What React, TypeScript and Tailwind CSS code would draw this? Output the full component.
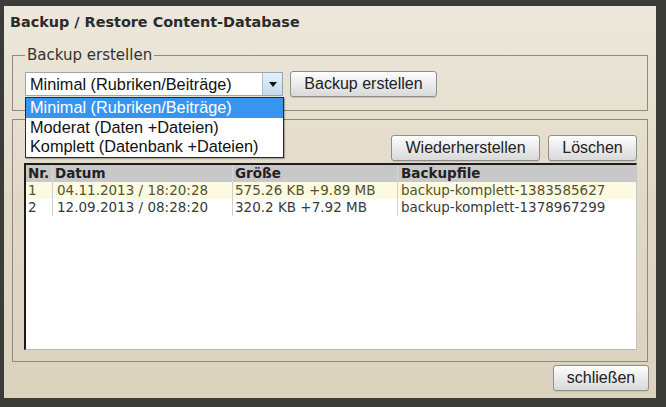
const rows = [
  { nr: "1", datum: "04.11.2013 / 18:20:28", groesse: "575.26 KB +9.89 MB", file: "backup-komplett-1383585627", active: true },
  { nr: "2", datum: "12.09.2013 / 08:28:20", groesse: "320.2 KB +7.92 MB", file: "backup-komplett-1378967299", active: false },
];

const options = ["Minimal (Rubriken/Beiträge)", "Moderat (Daten +Dateien)", "Komplett (Datenbank +Dateien)"];

function Btn({ label, className = "" }: { label: string; className?: string }) {
  return (
    <button
      className={`h-[26px] rounded-[3px] border border-[#8e8e8e] bg-linear-to-b from-[#fdfdfd] to-[#d9d9d9] text-[16px] leading-none text-[#222] font-['Liberation_Sans',Arial,sans-serif] shadow-[0_1px_0_#c9c2b2] ${className}`}
    >
      {label}
    </button>
  );
}

export default function App() {
  return (
    <div className="w-[666px] h-[407px] bg-[#3b3b39] pl-[4px] pt-[6px] pr-[10px] pb-[9px]">
      <div className="relative flex h-full flex-col bg-linear-to-b from-[#ede8dc] via-[#e1d9c7] to-[#dbd2be]">
        {/* Title */}
        <div className="h-[40px] pl-[6px] pt-[6px] text-[14.4px] leading-[20px] font-bold text-[#2b2b2b] font-['DejaVu_Sans',Verdana,sans-serif]">
          Backup / Restore Content-Database
        </div>

        {/* Backup erstellen */}
        <fieldset className="mx-[8px] border border-[#8f8a7e] pl-[12px] pt-[7px] pb-[13px]">
          <legend className="px-[2px] text-[15px] leading-[18px] text-[#333] font-['DejaVu_Sans',Verdana,sans-serif]">
            Backup erstellen
          </legend>
          <div className="flex items-center gap-[7px]">
            <div className="flex h-[24px] w-[258px] border border-[#9aa6b1] bg-white">
              <div className="flex-1 pl-[4px] text-[16.3px] leading-[22px] text-[#111] font-['Liberation_Sans',Arial,sans-serif]">
                Minimal (Rubriken/Beiträge)
              </div>
              <div className="flex w-[20px] items-center justify-center border-l border-[#a9bdd0] bg-linear-to-b from-[#e3f0fb] to-[#c4dbef]">
                <svg width="8" height="5" viewBox="0 0 8 5">
                  <path d="M0 0h8L4 5z" fill="#111" />
                </svg>
              </div>
            </div>
            <Btn label="Backup erstellen" className="w-[147px]" />
          </div>
        </fieldset>

        {/* Backup wiederherstellen */}
        <fieldset className="mx-[8px] mt-[8px] border border-[#8f8a7e] pl-[11px] pr-[10px] pt-[15px] pb-[11px]">
          <div className="flex justify-end gap-[8px]">
            <Btn label="Wiederherstellen" className="w-[149px]" />
            <Btn label="Löschen" className="w-[89px]" />
          </div>
          <div className="mt-[2px] h-[187px] border-t-2 border-l-2 border-t-[#1c1c1c] border-l-[#1c1c1c] border-r border-b border-r-[#c4c4c4] border-b-[#b8b8b8] bg-white text-[13.5px] leading-[17px] font-['DejaVu_Sans',Verdana,sans-serif]">
            <div className="grid grid-cols-[26px_180px_165px_1fr] bg-[#c8c8c8] font-bold text-[#222]">
              <div className="pl-[2px]">Nr.</div>
              <div className="border-l border-[#d8d8d8] pl-[2px]">Datum</div>
              <div className="border-l border-[#d8d8d8] pl-[2px]">Größe</div>
              <div className="border-l border-[#d8d8d8] pl-[3px]">Backupfile</div>
            </div>
            {rows.map((r) => (
              <div
                key={r.nr}
                className={`grid grid-cols-[26px_180px_165px_1fr] ${r.active ? "bg-[#fcfbe1] text-[#55512f]" : "bg-white text-[#3a3a3a]"}`}
              >
                <div className="pl-[2px]">{r.nr}</div>
                <div className="border-l border-[#cfcfcf] pl-[4px]">{r.datum}</div>
                <div className="border-l border-[#cfcfcf] pl-[2px]">{r.groesse}</div>
                <div className="border-l border-[#cfcfcf] pl-[3px]">{r.file}</div>
              </div>
            ))}
          </div>
        </fieldset>

        <div className="mt-[3px] flex justify-end pr-[7px]">
          <Btn label="schließen" className="w-[96px]" />
        </div>

        {/* Open select list */}
        <div className="absolute left-[21px] top-[91px] w-[259px] border border-[#2a2a2a] bg-white text-[16.3px] text-[#111] font-['Liberation_Sans',Arial,sans-serif] shadow-[1px_1px_1px_rgba(0,0,0,0.25)]">
          {options.map((o, i) => (
            <div
              key={o}
              className={`h-[19.5px] pl-[4px] leading-[19.5px] ${i === 0 ? "bg-[#3794ef] text-white" : ""}`}
            >
              {o}
            </div>
          ))}
        </div>
      </div>
    </div>
  );
}
